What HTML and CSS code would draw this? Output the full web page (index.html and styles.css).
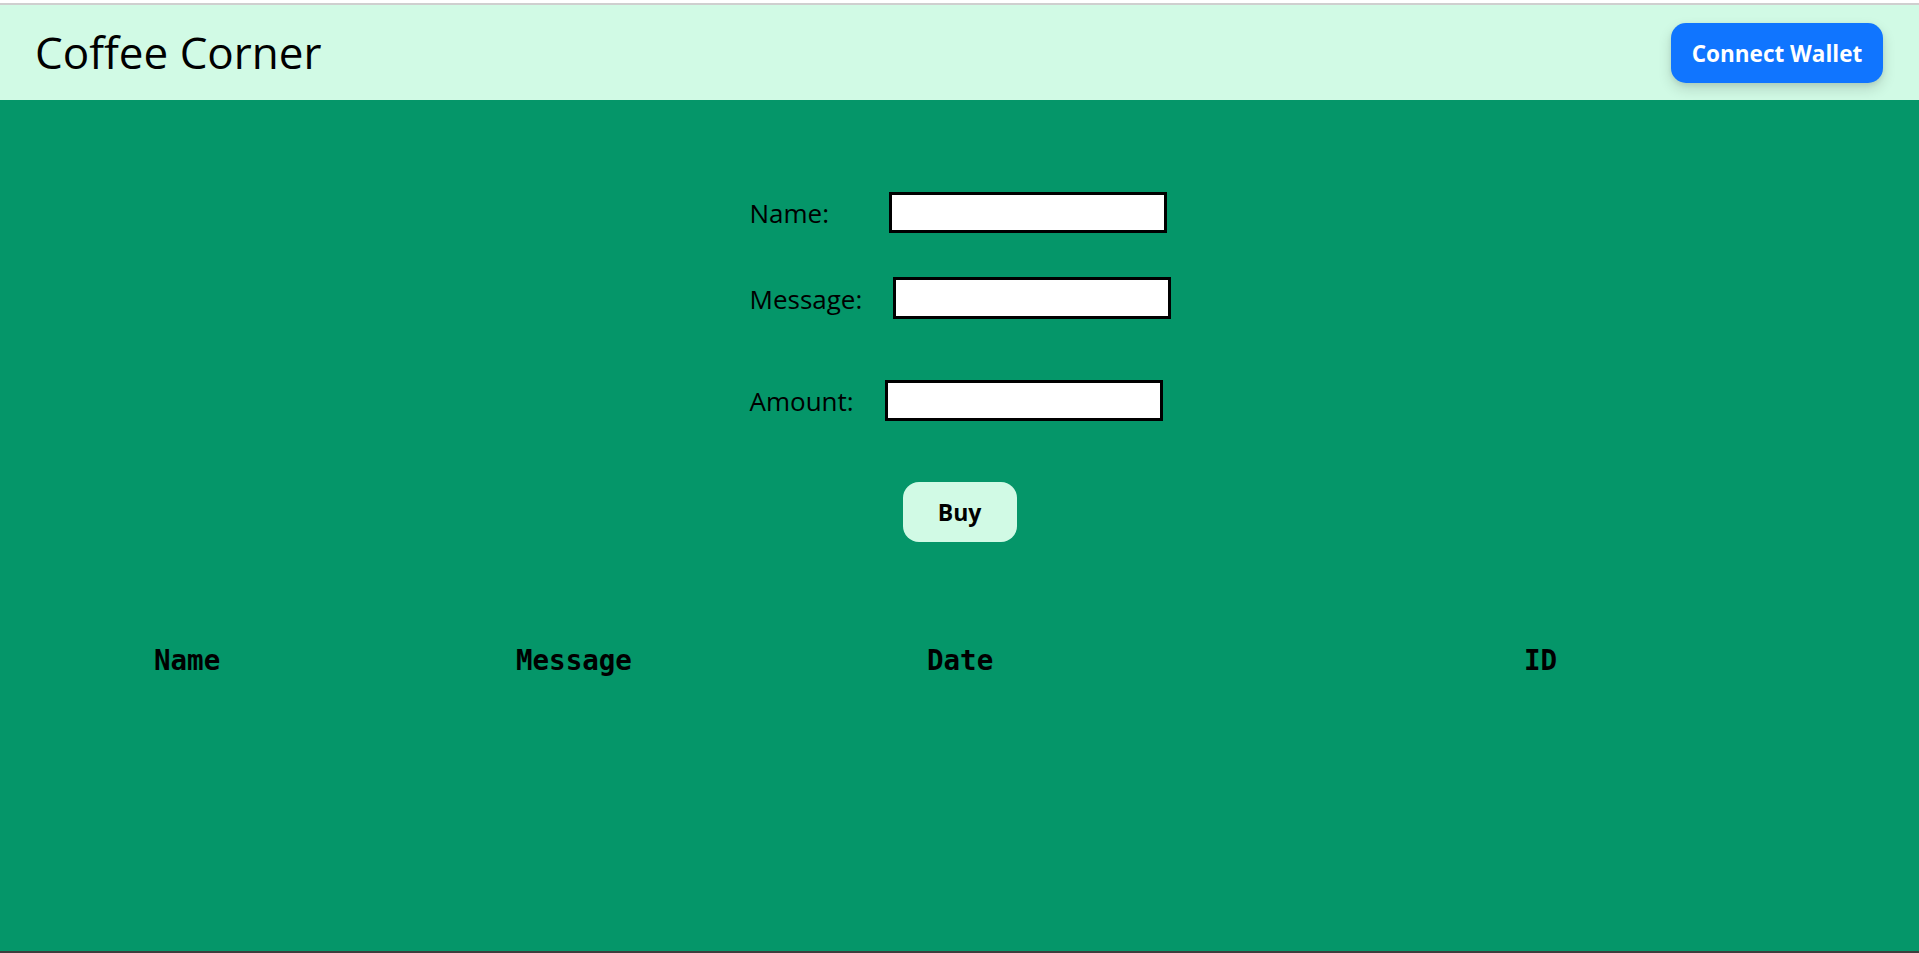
FILE: index.html
```html
<!DOCTYPE html>
<html lang="en">
<head>
<meta charset="utf-8">
<title>Coffee Corner</title>
<link rel="stylesheet" href="styles.css">
</head>
<body>
<div class="page">
  <header class="topbar">
    <h1 class="brand">Coffee Corner</h1>
    <button class="connect-btn" type="button">Connect Wallet</button>
  </header>
  <main class="content">
    <form class="buy-form">
      <div class="form-row row-name">
        <label class="field-label label-name" for="name">Name:</label>
        <input class="field-input" id="name" type="text">
      </div>
      <div class="form-row row-message">
        <label class="field-label label-message" for="message">Message:</label>
        <input class="field-input input-tall" id="message" type="text">
      </div>
      <div class="form-row row-amount">
        <label class="field-label label-amount" for="amount">Amount:</label>
        <input class="field-input" id="amount" type="text">
      </div>
    </form>
    <button class="buy-btn" type="button">Buy</button>
    <div class="memo-table">
      <div class="memo-head">Name</div>
      <div class="memo-head">Message</div>
      <div class="memo-head">Date</div>
      <div class="memo-head">ID</div>
    </div>
  </main>
</div>
</body>
</html>
```
FILE: styles.css
```css
html, body {
  margin: 0;
  padding: 0;
}

body {
  padding-top: 3px;
  background: #ffffff;
  font-family: "Open Sans", "Noto Sans", sans-serif;
  color: #000;
}

.page {
  height: 946px;
  border-top: 2px solid #cfcfcf;
  border-bottom: 2px solid #3d3d3d;
  display: flex;
  flex-direction: column;
}

.topbar {
  height: 95px;
  flex: 0 0 95px;
  background: #d1fae5;
  display: flex;
  align-items: center;
  justify-content: space-between;
  padding: 0 36px 0 35px;
}

.brand {
  margin: 0;
  font-size: 44px;
  font-weight: 400;
  line-height: 1.2;
  letter-spacing: 0;
}

.connect-btn {
  width: 212px;
  height: 60px;
  margin-top: 1px;
  border: none;
  border-radius: 15px;
  background: #1075ff;
  color: #fff;
  font-family: "Open Sans", "Noto Sans", sans-serif;
  font-weight: 700;
  font-size: 22.5px;
  box-shadow: 0 6px 14px rgba(0, 0, 0, 0.14), 0 2px 5px rgba(0, 0, 0, 0.08);
  cursor: pointer;
}

.content {
  flex: 1;
  background: #059669;
  display: flex;
  flex-direction: column;
  align-items: center;
}

.buy-form {
  width: 421px;
  margin-left: 1px;
  padding-top: 92px;
  display: flex;
  flex-direction: column;
}

.form-row {
  display: flex;
  align-items: center;
}

.row-message {
  margin-top: 44px;
}

.row-amount {
  margin-top: 61px;
}

.field-label {
  font-size: 26px;
  line-height: 1;
  padding-top: 1px;
}

.label-name { width: 139px; }
.label-message { width: 143px; }
.label-amount { width: 135px; }

.field-input {
  box-sizing: border-box;
  width: 278px;
  height: 41px;
  border: 3px solid #000;
  background: #fff;
  margin: 0;
  padding: 0 6px;
  font-size: 18px;
}

.input-tall {
  height: 42px;
}

.buy-btn {
  margin-top: 61px;
  width: 114px;
  height: 60px;
  border: none;
  border-radius: 16px;
  background: #d1fae5;
  color: #000;
  font-family: "Open Sans", "Noto Sans", sans-serif;
  font-weight: 700;
  font-size: 23px;
  cursor: pointer;
}

.memo-table {
  align-self: stretch;
  margin-top: 101px;
  padding-left: 154px;
  display: grid;
  grid-template-columns: 362px 411px 597px auto;
}

.memo-head {
  font-family: "DejaVu Sans Mono", "Liberation Mono", monospace;
  font-weight: 700;
  font-size: 27.5px;
  line-height: 34px;
}
```
